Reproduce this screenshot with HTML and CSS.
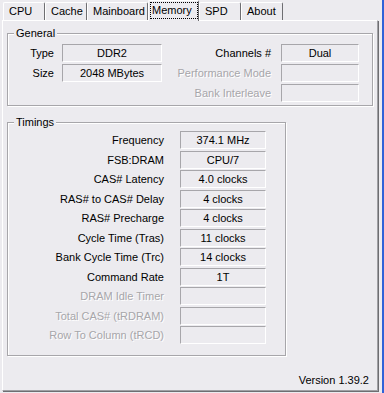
FILE: index.html
```html
<!DOCTYPE html>
<html>
<head>
    <title>CPU-Z Memory</title>
    <link rel="stylesheet" href="styles.css">
</head>
<body>
    <div class="window">
        <div class="tabs">
            <div class="tab">CPU</div>
            <div class="tab">Cache</div>
            <div class="tab">Mainboard</div>
            <div class="tab active"><span class="focus">Memory</span></div>
            <div class="tab">SPD</div>
            <div class="tab">About</div>
        </div>

        <div class="panel">
            <fieldset class="group general">
                <legend>General</legend>
                <div class="general-grid">
                    <span class="label">Type</span>
                    <span class="box">DDR2</span>
                    <span class="label">Channels #</span>
                    <span class="box right">Dual</span>

                    <span class="label">Size</span>
                    <span class="box">2048 MBytes</span>
                    <span class="label disabled">Performance Mode</span>
                    <span class="box right"></span>

                    <span></span>
                    <span></span>
                    <span class="label disabled">Bank Interleave</span>
                    <span class="box right"></span>
                </div>
            </fieldset>

            <fieldset class="group timings">
                <legend>Timings</legend>
                <div class="timings-grid">
                    <span class="label">Frequency</span><span class="box">374.1 MHz</span>
                    <span class="label">FSB:DRAM</span><span class="box">CPU/7</span>
                    <span class="label">CAS# Latency</span><span class="box">4.0 clocks</span>
                    <span class="label">RAS# to CAS# Delay</span><span class="box">4 clocks</span>
                    <span class="label">RAS# Precharge</span><span class="box">4 clocks</span>
                    <span class="label">Cycle Time (Tras)</span><span class="box">11 clocks</span>
                    <span class="label">Bank Cycle Time (Trc)</span><span class="box">14 clocks</span>
                    <span class="label">Command Rate</span><span class="box">1T</span>
                    <span class="label disabled">DRAM Idle Timer</span><span class="box"></span>
                    <span class="label disabled">Total CAS# (tRDRAM)</span><span class="box"></span>
                    <span class="label disabled">Row To Column (tRCD)</span><span class="box"></span>
                </div>
            </fieldset>

            <div class="version">Version 1.39.2</div>
        </div>
    </div>
</body>
</html>
```

FILE: styles.css
```css
body {
    margin: 0;
    background-color: #ecebef;
    font-family: "Liberation Sans", Arial, sans-serif;
    font-size: 11px;
    color: #000;
}

.window {
    width: 384px;
    height: 393px;
    box-sizing: border-box;
    padding-left: 2px;
    border-right: 2px solid #2f62d8;
}

.tabs {
    display: flex;
    align-items: flex-end;
    height: 20px;
    padding-left: 1px;
}

.tab {
    box-sizing: border-box;
    height: 18px;
    min-width: 42px;
    padding: 0 2px 0 5px;
    line-height: 17px;
    border-top: 1px solid #fff;
    border-left: 1px solid #fff;
    border-right: 1px solid #6e6e72;
    border-radius: 2px 2px 0 0;
    background-color: #ecebef;
}

.tab.active {
    position: relative;
    z-index: 1;
    width: 51px;
    height: 21px;
    margin-bottom: -1px;
    padding: 2px 1px 0 2px;
    line-height: 15px;
}

.focus {
    display: block;
    outline: 1px dotted #000;
    padding: 0 1px;
}

.panel {
    box-sizing: border-box;
    width: 376px;
    height: 371px;
    border-top: 1px solid #fff;
    border-left: 1px solid #fff;
    border-right: 1px solid #a0a0a4;
    border-bottom: 1px solid #a0a0a4;
    box-shadow: 1px 1px 0 #6e6e72;
    display: flex;
    flex-direction: column;
    padding-left: 4px;
}

.group {
    margin: 0;
    padding: 0;
    min-width: 0;
    border: 1px solid #a7a6aa;
    box-shadow: 1px 1px 0 #fff, inset 1px 1px 0 #fff;
}

.group legend {
    margin-left: 6px;
    padding: 0 2px;
    line-height: 13px;
    background-color: #ecebef;
}

.general {
    width: 366px;
    box-sizing: border-box;
    margin-top: 6px;
    padding: 4px 0 3px;
}

.timings {
    width: 279px;
    box-sizing: border-box;
    margin-top: 10px;
    padding: 2px 0 11px;
}

.general-grid {
    display: grid;
    grid-template-columns: 46px 100px 101px 80px;
    grid-auto-rows: 18px;
    column-gap: 8px;
    row-gap: 2px;
}

.general-grid .right {
    margin-left: 2px;
}

.timings-grid {
    display: grid;
    grid-template-columns: 156px 86px;
    grid-auto-rows: 18px;
    column-gap: 16px;
    row-gap: 1.5px;
}

.label {
    text-align: right;
    line-height: 18px;
    white-space: nowrap;
}

.disabled {
    color: #a7a6aa;
    text-shadow: 1px 1px 0 #fff;
}

.box {
    box-sizing: border-box;
    text-align: center;
    line-height: 16px;
    border-top: 1px solid #a7a6aa;
    border-left: 1px solid #a7a6aa;
    border-right: 1px solid #fff;
    border-bottom: 1px solid #fff;
}

.version {
    margin-top: auto;
    padding: 0 8px 3px 0;
    text-align: right;
    line-height: 14px;
}
```
